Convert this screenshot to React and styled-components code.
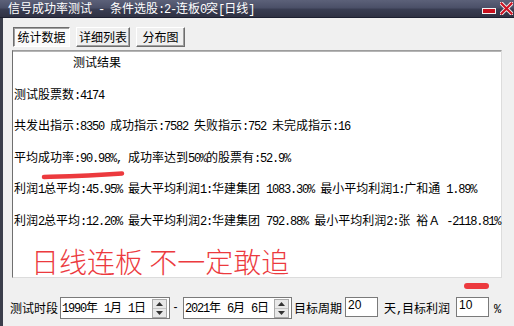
import React from 'react';
import styled, { createGlobalStyle } from 'styled-components';

const CJK = '"Noto Sans CJK SC", "Noto Sans", sans-serif';

const GlobalStyle = createGlobalStyle`
  html, body {
    margin: 0;
    padding: 0;
    background: #f0f0f0;
  }
  body {
    font-family: ${CJK};
    font-size: 12px;
    color: #000;
  }
`;

const RESULT_LINES = [
  { text: '测试结果', indent: 59 },
  { text: '测试股票数:4174' },
  { text: '共发出指示:8350 成功指示:7582 失败指示:752 未完成指示:16' },
  { text: '平均成功率:90.98%, 成功率达到50%的股票有:52.9%' },
  { text: '利润1总平均:45.95% 最大平均利润1:华建集团 1083.30% 最小平均利润1:广和通 1.89%' },
  { text: '利润2总平均:12.20% 最大平均利润2:华建集团 792.88% 最小平均利润2:张 裕Ａ -2118.81%' },
];

const TABS = [
  { label: '统计数据', w: 57, active: true },
  { label: '详细列表', w: 54 },
  { label: '分布图', w: 49 },
];

// half-width runs get the narrow mono face so they take 6px a glyph
const mix = (s) =>
  s.split(/([\x20-\x7e]+)/).map((part, i) =>
    /^[\x20-\x7e]+$/.test(part) ? <Asc key={i}>{part}</Asc> : part
  );

const Spin = () => (
  <SpinBox>
    <SpinHalf>
      <svg width="7" height="4" viewBox="0 0 7 4"><path d="M0 4 L3.5 0 L7 4 Z" fill="#333" /></svg>
    </SpinHalf>
    <SpinHalf>
      <svg width="7" height="4" viewBox="0 0 7 4"><path d="M0 0 L3.5 4 L7 0 Z" fill="#333" /></svg>
    </SpinHalf>
  </SpinBox>
);

export default function App() {
  return (
    <Window>
      <GlobalStyle />
      <TitleBar>
        <Title>{mix('信号成功率测试 - 条件选股:2-连板0突[日线]')}</Title>
        <WinButtons>
          <svg width="14" height="6" viewBox="0 0 14 6">
            <rect x="0.5" y="0.5" width="13" height="5" fill="#c8101e" stroke="#f4f4f4" strokeWidth="1" />
          </svg>
          <svg width="13" height="13" viewBox="0 0 13 13">
            <path d="M1.5 1.5 L11.5 11.5 M11.5 1.5 L1.5 11.5" stroke="#f2f2f2" strokeWidth="4" strokeLinecap="square" />
            <path d="M1.5 1.5 L11.5 11.5 M11.5 1.5 L1.5 11.5" stroke="#cc1424" strokeWidth="2.2" strokeLinecap="square" />
          </svg>
        </WinButtons>
      </TitleBar>

      <Body>
        <TabRow>
          {TABS.map((t) => (
            <Tab key={t.label} $active={t.active} $w={t.w}>{t.label}</Tab>
          ))}
        </TabRow>

        <Panel>
          {RESULT_LINES.map((l) => (
            <Line key={l.text} $indent={l.indent || 0}>{mix(l.text)}</Line>
          ))}
        </Panel>

        <BottomRow>
          <Label>测试时段</Label>
          <DateBox $w={110}>
            <DateText>{mix('1990年 1月 1日')}</DateText>
            <Spin />
          </DateBox>
          <Dash>-</Dash>
          <DateBox $w={109}>
            <DateText>{mix('2021年 6月 6日')}</DateText>
            <Spin />
          </DateBox>
          <Label $ml={2}>目标周期</Label>
          <NumBox $ml={3}>20</NumBox>
          <Label $ml={6}>{mix('天,目标利润')}</Label>
          <NumBox $ml={6}>10</NumBox>
          <Label $ml={5}><Asc>%</Asc></Label>
        </BottomRow>
      </Body>

      <Note>日线连板 不一定敢追</Note>
      <Mark width="84" height="10" viewBox="0 0 84 10" $x={41} $y={170}>
        <path d="M3 7 C 20 6.5, 45 6, 81 3.5" stroke="#ec3a3e" strokeWidth="4.5" strokeLinecap="round" fill="none" />
      </Mark>
      <Pill />
    </Window>
  );
}

const Window = styled.div`
  position: relative;
  width: 514px;
  height: 326px;
  overflow: hidden;
  display: flex;
  flex-direction: column;
  background: #f0f0f0;
`;

const TitleBar = styled.div`
  height: 17px;
  flex-shrink: 0;
  display: flex;
  align-items: center;
  justify-content: space-between;
  padding-left: 8px;
  border-bottom: 1px solid #1d2030;
  background: linear-gradient(#5c6179 0%, #4b5068 45%, #393d52 55%, #2f3243 100%);
`;

const Title = styled.div`
  color: #fff;
  font-size: 12px;
  line-height: 17px;
  white-space: pre;
`;

const WinButtons = styled.div`
  display: flex;
  align-items: flex-end;
  gap: 4px;
  height: 17px;
  padding: 0 1px 2px 0;
  box-sizing: border-box;

  svg:first-child {
    margin-bottom: 1px;
  }
`;

const Body = styled.div`
  flex: 1;
  display: flex;
  flex-direction: column;
  border-left: 3px solid #3b3e4b;
  padding-left: 7px;
`;

const TabRow = styled.div`
  display: flex;
  gap: 6px;
  margin: 9px 0 0 3px;
`;

const Tab = styled.div`
  box-sizing: border-box;
  width: ${(p) => p.$w}px;
  height: 20px;
  line-height: 18px;
  text-align: center;
  border: 1px solid;
  border-color: ${(p) => (p.$active ? '#6e6e6e #ffffff #ffffff #6e6e6e' : '#ffffff #6e6e6e #6e6e6e #ffffff')};
  background: ${(p) => (p.$active ? '#fbfbfb' : '#f0f0f0')};
  box-shadow: ${(p) => (p.$active ? 'inset 1px 1px 0 #a0a0a0' : 'inset -1px -1px 0 #a0a0a0')};
  white-space: nowrap;
`;

const Panel = styled.div`
  box-sizing: border-box;
  width: 490px;
  height: 228px;
  margin: 3px 0 0 2px;
  padding: 3px 0 0 1px;
  background: #fff;
  border: 1px solid;
  border-color: #9c9c9c #dcdcdc #dcdcdc #6f6f6f;
  box-shadow: inset 0 1px 0 #b5b5b5;
  display: flex;
  flex-direction: column;
  gap: 15.6px;
`;

const Line = styled.div`
  line-height: 16px;
  height: 16px;
  white-space: pre;
  padding-left: ${(p) => p.$indent}px;
`;

const Asc = styled.span`
  font-family: "Liberation Mono", "DejaVu Sans Mono", monospace;
  font-size: 12px;
  letter-spacing: -1.2px;
`;

const BottomRow = styled.div`
  display: flex;
  align-items: flex-start;
  margin-top: 19px;
  white-space: pre;
`;

const Label = styled.div`
  line-height: 22px;
  margin-left: ${(p) => p.$ml || 0}px;
`;

const DateBox = styled.div`
  box-sizing: border-box;
  width: ${(p) => p.$w}px;
  height: 22px;
  margin-left: 2px;
  display: flex;
  align-items: center;
  justify-content: space-between;
  padding: 0 2px 0 1px;
  background: #fff;
  border: 1px solid #7a7a7a;
`;

const DateText = styled.span`
  line-height: 20px;
  white-space: pre;
`;

const SpinBox = styled.div`
  display: flex;
  flex-direction: column;
  width: 15px;
  height: 19px;
  box-sizing: border-box;
  border: 1px solid #a9a9a9;
  background: #e8e8e8;
`;

const SpinHalf = styled.div`
  flex: 1;
  display: flex;
  align-items: center;
  justify-content: center;

  &:first-child {
    border-bottom: 1px solid #c4c4c4;
  }
`;

const Dash = styled.div`
  width: 11px;
  text-align: center;
  line-height: 21px;
  font-family: "Liberation Sans", sans-serif;
`;

const NumBox = styled.div`
  box-sizing: border-box;
  width: 33px;
  height: 20px;
  margin-left: ${(p) => p.$ml}px;
  padding: 1px 0 0 2px;
  background: #fff;
  border: 1px solid #7a7a7a;
  font-family: "Liberation Sans", sans-serif;
  font-size: 12px;
  line-height: 12px;
`;

const Note = styled.div`
  position: absolute;
  left: 31px;
  top: 243px;
  color: #ec3a3e;
  font-family: ${CJK};
  font-size: 28px;
  font-weight: 300;
  line-height: 36px;
  white-space: pre;
`;

const Mark = styled.svg`
  position: absolute;
  left: ${(p) => p.$x}px;
  top: ${(p) => p.$y}px;
`;

const Pill = styled.div`
  position: absolute;
  left: 464px;
  top: 283px;
  width: 25px;
  height: 6px;
  border-radius: 3px;
  background: #ec3a3e;
`;
